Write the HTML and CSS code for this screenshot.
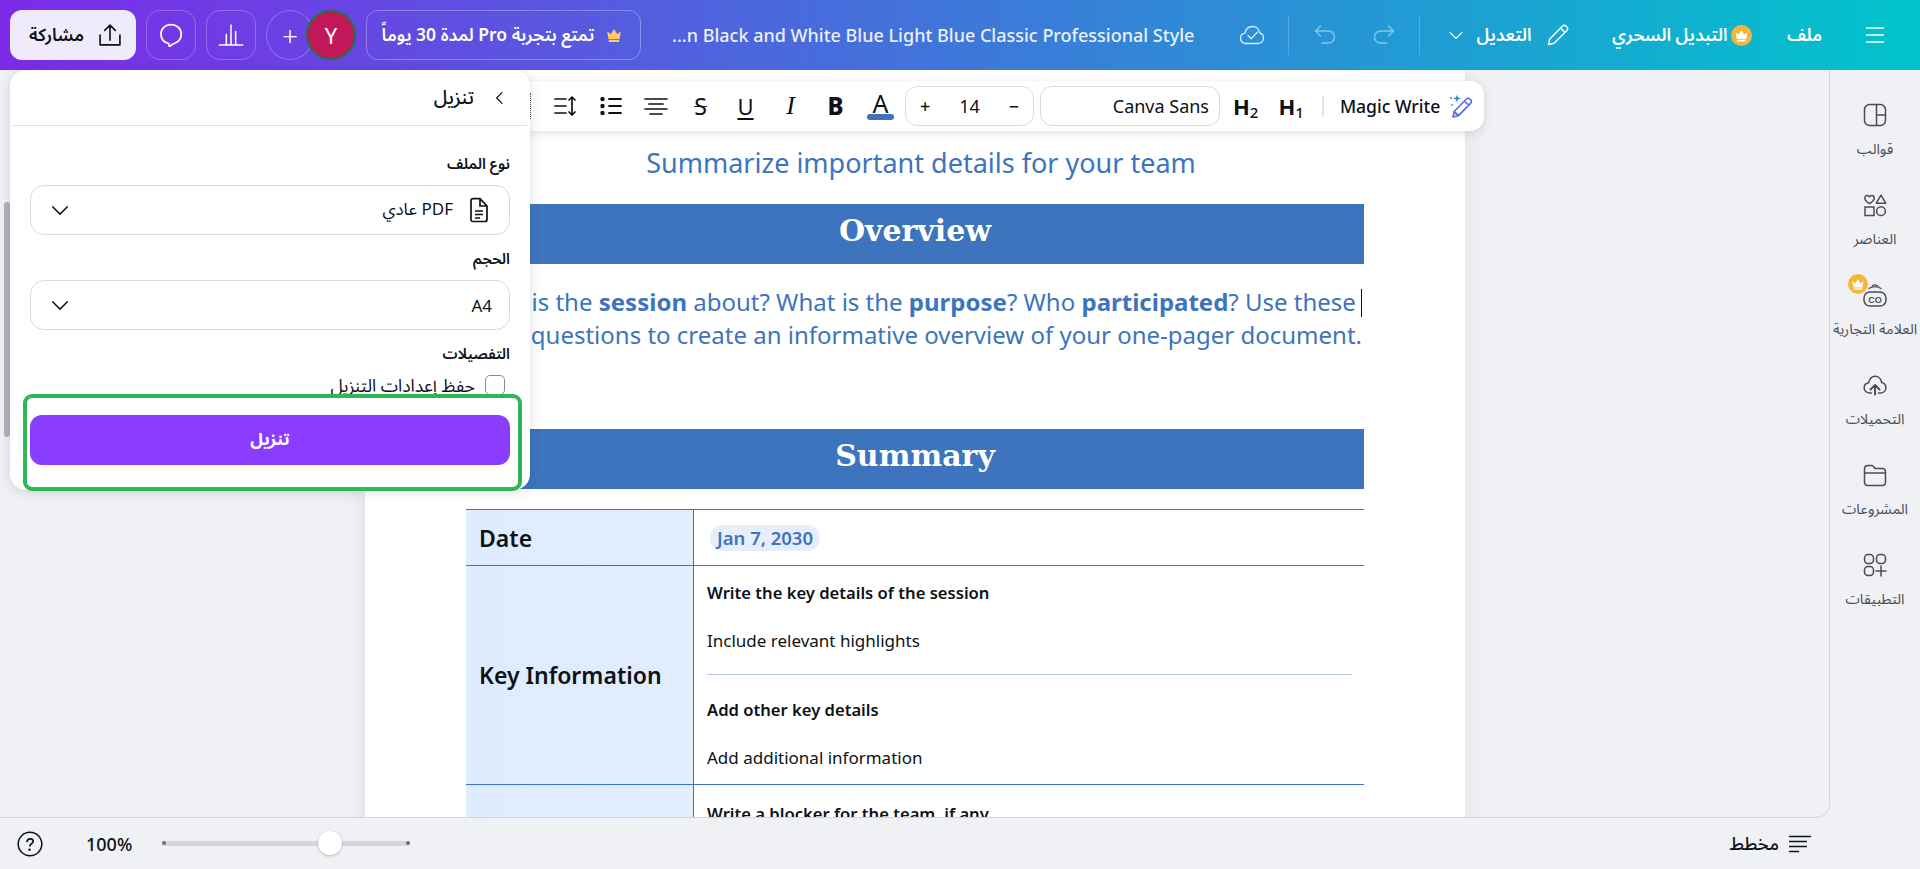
FILE: index.html
```html
<!DOCTYPE html>
<html lang="ar">
<head>
<meta charset="utf-8">
<title>Canva</title>
<link rel="stylesheet" href="styles.css">
</head>
<body>
<svg class="defs" width="0" height="0" aria-hidden="true">
  <symbol id="crown" viewBox="0 0 24 24"><path d="M4.500 8l3.900 3.200L12 5.500l3.600 5.700L19.500 8 18 16.500H6z" fill="currentColor"/><rect x="6" y="17.500" width="12" height="2.200" rx="1.100" fill="currentColor"/></symbol>
  <symbol id="chev" viewBox="0 0 24 24"><path d="M4 8.500l8 8 8-8" fill="none" stroke="currentColor" stroke-width="1.600" stroke-linecap="round" stroke-linejoin="round"/></symbol>
</svg>

<header class="topbar">
  <button class="btn-share">
    <svg class="ic28" viewBox="0 0 24 24"><path d="M3.500 12v8.500h17V12M12 16.500V3.500M7.500 8L12 3.500 16.500 8" fill="none" stroke="currentColor" stroke-width="1.400" stroke-linecap="round" stroke-linejoin="round"/></svg>
    <span>مشاركة</span>
  </button>
  <button class="btn-ghost">
    <svg class="ic28" viewBox="0 0 24 24"><path d="M12 3.200c5 0 8.800 3.500 8.800 8.100 0 4-2.700 6.900-7.100 8.400l-2.400 1.800c-.5.300-1 0-1-.6v-1.400c-4-1-6.900-4-6.900-8.100C3.400 6.700 7 3.200 12 3.200z" fill="none" stroke="#fff" stroke-width="1.500" stroke-linejoin="round"/></svg>
  </button>
  <button class="btn-ghost">
    <svg class="ic28" viewBox="0 0 24 24"><path d="M2 20.500h20M8 20V11.500M12 20V3.500M16 20V9" fill="none" stroke="#fff" stroke-width="1.300" stroke-linecap="round"/></svg>
  </button>
  <div class="people">
    <button class="btn-plus">+</button>
    <div class="avatar">Y</div>
  </div>
  <button class="btn-pro">
    <span dir="rtl">تمتع بتجربة Pro لمدة 30 يوماً</span>
    <svg class="crown-mini" viewBox="0 0 24 24"><use href="#crown"/></svg>
  </button>
  <div class="doc-title">...n Black and White Blue Light Blue Classic Professional Style</div>
  <svg class="cloud" viewBox="0 0 26 24"><path d="M7 20.500c-3.300 0-5.500-2.300-5.500-5.200 0-2.700 1.900-4.700 4.400-5.100C6.700 6.300 9.700 3.500 13.500 3.500c3.700 0 6.700 2.700 7.300 6.500 2.300.6 3.700 2.700 3.700 5 0 3-2.300 5.500-5.500 5.500z" fill="none" stroke="#dfe9fb" stroke-width="1.300"/><path d="M9 12.500l3.200 3.200L18.500 9" fill="none" stroke="#dfe9fb" stroke-width="1.300" stroke-linecap="round" stroke-linejoin="round"/></svg>
  <span class="vsep s1"></span>
  <svg class="hist h1" viewBox="0 0 24 24"><path d="M7.500 3L2.500 8l5 5M3 8h12.500a6 6 0 0 1 0 12H9" fill="none" stroke="currentColor" stroke-width="1.400" stroke-linecap="round" stroke-linejoin="round"/></svg>
  <svg class="hist h2" viewBox="0 0 24 24"><path d="M16.500 3l5 5-5 5M21 8H8.500a6 6 0 0 0 0 12H15" fill="none" stroke="currentColor" stroke-width="1.400" stroke-linecap="round" stroke-linejoin="round"/></svg>
  <span class="vsep s2"></span>
  <svg class="edit-chev" viewBox="0 0 24 24"><use href="#chev"/></svg>
  <span class="top-link edit-label">التعديل</span>
  <svg class="pencil" viewBox="0 0 24 24"><path d="M2.500 21.500l1.300-5.600L16.500 3.100c1-1 2.500-1 3.500 0l.9.900c1 1 1 2.500 0 3.500L8.100 20.200zM14.500 5l4.500 4.500" fill="none" stroke="#fff" stroke-width="1.400" stroke-linejoin="round"/></svg>
  <span class="top-link magic-label">التبديل السحري</span>
  <span class="crown-badge"><svg viewBox="0 0 24 24"><use href="#crown"/></svg></span>
  <span class="top-link file-label">ملف</span>
  <svg class="burger" viewBox="0 0 18 18"><path d="M.5 2h17M.5 9h17M.5 16h17" stroke="#fff" stroke-width="1.500" stroke-linecap="round" fill="none"/></svg>
</header>

<div class="workspace">
  <main class="canvas">
    <article class="page">
      <p class="subtitle">Summarize important details for your team</p>
      <h2 class="band">Overview</h2>
      <p class="para">What is the <b>session</b> about? What is the <b>purpose</b>? Who <b>participated</b>? Use these<span class="caret"></span><br>questions to create an informative overview of your one-pager document.</p>
      <h2 class="band band-summary">Summary</h2>
      <div class="tbl">
        <div class="row row-date">
          <div class="th">Date</div>
          <div class="td"><span class="chip">Jan 7, 2030</span></div>
        </div>
        <div class="row row-key">
          <div class="th">Key Information</div>
          <div class="td td-stack">
            <strong>Write the key details of the session</strong>
            <span>Include relevant highlights</span>
            <hr class="td-rule">
            <strong>Add other key details</strong>
            <span>Add additional information</span>
          </div>
        </div>
        <div class="row row-block">
          <div class="th"></div>
          <div class="td td-stack"><strong>Write a blocker for the team, if any</strong></div>
        </div>
      </div>
    </article>

    <div class="float-bar">
      <span class="dots"></span>
      <button class="tb">
        <svg class="ic24" viewBox="0 0 24 24"><path d="M1 5h11M1 12h11M1 19h11M18 3v18M15 6l3-3 3 3M15 18l3 3 3-3" fill="none" stroke="#0d1216" stroke-width="1.700" stroke-linecap="round" stroke-linejoin="round"/></svg>
      </button>
      <button class="tb">
        <svg class="ic24" viewBox="0 0 24 24"><circle cx="3.500" cy="5" r="2.200" fill="#0d1216"/><circle cx="3.500" cy="12" r="2.200" fill="#0d1216"/><circle cx="3.500" cy="19" r="2.200" fill="#0d1216"/><path d="M10 5h12M10 12h12M10 19h12" stroke="#0d1216" stroke-width="1.800" stroke-linecap="round"/></svg>
      </button>
      <button class="tb">
        <svg class="ic24" viewBox="0 0 24 24"><path d="M1 5h22M5 10h14M1 15h22M6 20h12" stroke="#0d1216" stroke-width="1.700" stroke-linecap="round"/></svg>
      </button>
      <button class="tb tb-s">S</button>
      <button class="tb tb-u">U</button>
      <button class="tb tb-i">I</button>
      <button class="tb tb-b">B</button>
      <button class="tb tb-a"><span>A</span><i class="a-bar"></i></button>
      <div class="size-box"><span>+</span><span class="size-num">14</span><span>−</span></div>
      <div class="font-box">Canva Sans</div>
      <span class="hd hd2">H<sub>2</sub></span>
      <span class="hd hd1">H<sub>1</sub></span>
      <span class="bar-sep"></span>
      <span class="mw">Magic Write</span>
      <svg class="mw-ic" viewBox="0 0 26 26"><path d="M5 24l1.200-5.500L18.500 6c1-1 2.400-1 3.300 0l.9.900c1 1 1 2.400 0 3.300L10.500 22.700zM16.500 8l4.300 4.300M6.500 19l4 3.500" fill="none" stroke="#5b6fd6" stroke-width="1.700" stroke-linejoin="round"/><path d="M9 1.500l1 3 3 1-3 1-1 3-1-3-3-1 3-1z" fill="#1f8ecf"/><circle cx="3" cy="5" r="1" fill="#1f8ecf"/><circle cx="4" cy="12" r="1" fill="#3b9ed8"/></svg>
    </div>
  </main>

  <aside class="rail">
    <a class="rail-item">
      <svg class="ic24 rail-ic" viewBox="0 0 24 24"><rect x="1.500" y="1.500" width="21" height="21" rx="5" fill="none" stroke="#4a4d55" stroke-width="1.500"/><path d="M13.500 1.500v21M13.500 12h9" fill="none" stroke="#4a4d55" stroke-width="1.500"/></svg>
      <span>قوالب</span>
    </a>
    <a class="rail-item">
      <svg class="ic24 rail-ic" viewBox="0 0 24 24"><path d="M6.500 10.500C3.500 8.700 1.800 7.200 1.800 5.200c0-1.500 1.100-2.700 2.500-2.700.9 0 1.700.5 2.200 1.200.5-.7 1.300-1.200 2.200-1.200 1.400 0 2.500 1.200 2.500 2.700 0 2-1.700 3.500-4.700 5.300zM18 2.200l4.700 8H13.300z" fill="none" stroke="#4a4d55" stroke-width="1.500" stroke-linejoin="round"/><rect x="2" y="14" width="9" height="8.500" fill="none" stroke="#4a4d55" stroke-width="1.500"/><circle cx="18" cy="18.200" r="4.400" fill="none" stroke="#4a4d55" stroke-width="1.500"/></svg>
      <span>العناصر</span>
    </a>
    <a class="rail-item rail-brand">
      <span class="rail-crown"><svg viewBox="0 0 24 24"><use href="#crown"/></svg></span>
      <svg class="ic24 rail-ic" viewBox="0 0 24 24"><rect x="1" y="9" width="22" height="14" rx="6" fill="none" stroke="#4a4d55" stroke-width="1.500"/><path d="M6 5.500C9 3 15 3 18 5.500M9.500 2.500c1.500-.8 3.500-.8 5 0" fill="none" stroke="#4a4d55" stroke-width="1.300" stroke-linecap="round"/><text x="12" y="19.500" text-anchor="middle" class="co">CO</text></svg>
      <span>العلامة التجارية</span>
    </a>
    <a class="rail-item">
      <svg class="ic24 rail-ic" viewBox="0 0 24 24"><path d="M8.500 20H6.800C3.600 20 1.200 17.700 1.200 14.900c0-2.600 1.800-4.700 4.400-5.100C6.400 6 9 3.300 12.300 3.300c3.200 0 5.800 2.600 6.300 6.300 2.500.5 4.300 2.700 4.300 5.200 0 3-2.400 5.200-5.500 5.200h-1.900" fill="none" stroke="#4a4d55" stroke-width="1.500" stroke-linecap="round"/><path d="M12 21.500V12M7.500 16.500L12 12l4.500 4.500" fill="none" stroke="#4a4d55" stroke-width="1.900" stroke-linecap="round" stroke-linejoin="round"/></svg>
      <span>التحميلات</span>
    </a>
    <a class="rail-item">
      <svg class="ic24 rail-ic" viewBox="0 0 24 24"><path d="M1.500 6c0-2 1.300-3.500 3.300-3.500h3.500c1.300 0 2 .5 2.700 1.500l1 1.500h7.200c2 0 3.300 1.500 3.300 3.500v10c0 2-1.300 3.500-3.300 3.500H4.800c-2 0-3.300-1.500-3.300-3.500zM1.500 10h21" fill="none" stroke="#4a4d55" stroke-width="1.500" stroke-linejoin="round"/></svg>
      <span>المشروعات</span>
    </a>
    <a class="rail-item">
      <svg class="ic24 rail-ic" viewBox="0 0 24 24"><rect x="1.500" y="1.500" width="9" height="9" rx="3.500" fill="none" stroke="#4a4d55" stroke-width="1.500"/><rect x="13.500" y="1.500" width="9" height="9" rx="3.500" fill="none" stroke="#4a4d55" stroke-width="1.500"/><rect x="1.500" y="13.500" width="9" height="9" rx="3.500" fill="none" stroke="#4a4d55" stroke-width="1.500"/><path d="M18 13v10M13 18h10" stroke="#4a4d55" stroke-width="1.500" stroke-linecap="round"/></svg>
      <span>التطبيقات</span>
    </a>
  </aside>
</div>

<footer class="statusbar">
  <svg class="help" viewBox="0 0 26 26"><circle cx="13" cy="13" r="11.800" fill="none" stroke="#0d1216" stroke-width="1.500"/><path d="M10 10.500c.3-1.700 1.500-2.700 3.200-2.700 1.800 0 3 1 3 2.500 0 1.300-.9 2-2 2.700-.8.500-1.200 1-1.200 1.800" fill="none" stroke="#0d1216" stroke-width="1.700" stroke-linecap="round"/><circle cx="12.500" cy="18.800" r="1.200" fill="#0d1216"/></svg>
  <span class="zoom-val">100%</span>
  <div class="slider"><i class="dot dot-l"></i><i class="knob"></i><i class="dot dot-r"></i></div>
  <span class="notes">مخطط</span>
  <svg class="notes-ic" viewBox="0 0 22 18"><path d="M0 1.500h22M0 6.500h18M0 11.500h18M0 16.500h10" stroke="#0d1216" stroke-width="1.600" fill="none"/></svg>
</footer>

<div class="scroll-thumb"></div>

<section class="panel">
  <div class="panel-head">
    <span>تنزيل</span>
    <svg class="head-chev" viewBox="0 0 24 24"><path d="M15 4l-8 8 8 8" fill="none" stroke="#0d1216" stroke-width="1.800" stroke-linecap="round" stroke-linejoin="round"/></svg>
  </div>
  <div class="panel-body">
    <label class="fld-label">نوع الملف</label>
    <div class="select">
      <svg class="sel-chev" viewBox="0 0 24 24"><use href="#chev"/></svg>
      <span class="sel-val" dir="rtl">PDF عادي</span>
      <svg class="file-ic" viewBox="0 0 20 26"><path d="M2 4c0-1.300.7-2.300 2-2.300h7l7 7.300v13.500c0 1.300-.8 2-2 2H4c-1.300 0-2-.7-2-2zM11 1.700V9h7M6 14h8M6 17.500h8M6 21h5" fill="none" stroke="#0d1216" stroke-width="1.700" stroke-linejoin="round"/></svg>
    </div>
    <label class="fld-label">الحجم</label>
    <div class="select">
      <svg class="sel-chev" viewBox="0 0 24 24"><use href="#chev"/></svg>
      <span class="sel-val sel-size">A4</span>
    </div>
    <label class="fld-label">التفصيلات</label>
    <div class="check-row">
      <span class="check-label">حفظ إعدادات التنزيل</span>
      <span class="checkbox"></span>
    </div>
  </div>
  <div class="panel-foot">
    <button class="btn-download">تنزيل</button>
  </div>
  <div class="highlight"></div>
</section>
</body>
</html>
```

FILE: styles.css
```css
* { box-sizing: border-box; }
html, body { height: 100%; }
body {
  margin: 0;
  height: 869px;
  overflow: hidden;
  position: relative;
  display: flex;
  flex-direction: column;
  background: #f0f1f5;
  color: #0d1216;
  font-family: "Noto Sans", "Noto Sans Arabic", "DejaVu Sans", sans-serif;
}
button { font: inherit; color: inherit; background: none; border: 0; padding: 0; }
.defs { position: absolute; }
.ic24 { width: 24px; height: 24px; display: block; }
.ic28 { width: 28px; height: 28px; display: block; }

/* top bar */
.topbar {
  flex: 0 0 70px;
  display: flex;
  align-items: center;
  padding-left: 10px;
  background: linear-gradient(90deg, #7d2ae8 0%, #00c4cc 100%);
  color: #fff;
}
.btn-share {
  width: 126px; height: 50px; border-radius: 12px; padding-left: 7px;
  display: flex; align-items: center; justify-content: center; gap: 12px;
  background: #f0ebfb; color: #0d1216; font-size: 17.500px; font-weight: 600;
  flex-direction: row-reverse;
}
.btn-ghost {
  width: 50px; height: 50px; margin-left: 10px; border-radius: 14px;
  border: 1px solid rgba(255,255,255,.25);
  display: flex; align-items: center; justify-content: center;
}
.people { display: flex; margin-left: 10px; }
.btn-plus {
  width: 48px; height: 50px; border-radius: 50%;
  border: 1px solid rgba(255,255,255,.25);
  color: #fff; font-size: 28px; font-weight: 300; line-height: 1;
}
.avatar {
  width: 50px; height: 50px; margin-left: -8px; border-radius: 50%;
  background: #c2185b; border: 2px solid #24703f;
  display: flex; align-items: center; justify-content: center;
  color: #fff; font-size: 22px;
}
.btn-pro {
  width: 275px; height: 50px; margin-left: 10px; border-radius: 12px;
  border: 1px solid rgba(255,255,255,.3);
  display: flex; align-items: center; justify-content: center; gap: 9px;
  font-size: 17.500px; font-weight: 600; color: #fff;
}
.crown-mini { width: 22px; height: 22px; color: #ffc76b; }
.doc-title {
  width: 519px; margin-left: 31px;
  font-size: 18px; font-weight: 500; color: #eaf0fd; white-space: nowrap;
}
.cloud { width: 26px; height: 24px; margin-left: 48px; }
.vsep { width: 1px; height: 40px; background: rgba(255,255,255,.2); }
.s1 { margin-left: 23px; }
.s2 { margin-left: 23px; }
.hist { width: 24px; height: 24px; color: rgba(255,255,255,.45); }
.h1 { margin-left: 24px; }
.h2 { margin-left: 35px; }
.edit-chev { width: 18px; height: 18px; margin-left: 27px; color: #fff; }
.top-link { font-size: 17.500px; font-weight: 600; color: #fff; white-space: nowrap; }
.edit-label { margin-left: 11px; width: 56px; text-align: center; }
.pencil { width: 24px; height: 24px; margin-left: 14px; }
.magic-label { margin-left: 42px; width: 115px; text-align: center; }
.crown-badge {
  width: 21px; height: 21px; margin-left: 4px; border-radius: 50%;
  background: #f4b63a; color: #fff; display: block; padding: 1px;
}
.crown-badge svg, .rail-crown svg { display: block; width: 100%; height: 100%; }
.file-label { margin-left: 35px; width: 35px; text-align: center; }
.burger { width: 18px; height: 18px; margin-left: 44px; }

/* workspace */
.workspace { flex: 1; display: flex; min-height: 0; }
.canvas {
  position: relative;
  width: 1830px;
  padding-left: 365px;
  overflow: hidden;
  border-right: 1px solid #d4d5da;
  border-bottom: 1px solid #d4d5da;
  border-bottom-right-radius: 14px;
}
.page {
  width: 1100px; height: 1200px;
  padding: 73px 101px 0;
  background: #fff;
  box-shadow: 0 0 24px rgba(60,66,87,.09);
}
.subtitle {
  margin: 0; padding-left: 12px;
  text-align: center; font-size: 27px; line-height: 40px; color: #3d74bd;
  white-space: nowrap;
}
.band {
  margin: 21px 0 0; height: 60px;
  background: #3d74bd; color: #fff;
  text-align: center;
  font: 700 30px/54px "DejaVu Serif", "Liberation Serif", serif;
}
.para {
  margin: 21px 0 0; height: 144px;
  padding-right: 2px;
  text-align: right; white-space: nowrap;
  font-size: 24px; line-height: 33px; color: #3d74bd;
  direction: ltr;
}
.caret {
  display: inline-block; width: 1px; height: 28px;
  margin: 0 2px 0 5px; vertical-align: -6px; background: #0d1216;
}
.band-summary { margin-top: 0; }
.tbl { margin-top: 20px; border-top: 1px solid #3d74bd; }
.row { display: grid; grid-template-columns: 228px 1fr; border-bottom: 1px solid #3d74bd; }
.row-date { height: 56px; }
.row-key { height: 219px; }
.row-block { height: 200px; }
.th {
  display: flex; align-items: center; padding-left: 13px;
  background: linear-gradient(90deg, #deecfe, #e2edfd);
  border-right: 1px solid #3d74bd;
  font-size: 23px; font-weight: 600;
}
.td { display: flex; align-items: center; padding-left: 16px; }
.chip {
  height: 26px; padding: 0 7px; border-radius: 13px;
  background: #e6eefb; color: #3d74bd;
  font-size: 18.500px; font-weight: 600; line-height: 26px;
}
.td-stack {
  flex-direction: column; align-items: stretch; justify-content: flex-start;
  padding: 16px 12px 0 13px; font-size: 17px;
}
.td-stack strong, .td-stack span { display: block; line-height: 22px; }
.td-stack strong { font-weight: 600; font-size: 16.600px; }
.td-stack span { margin-top: 26px; }
.td-rule { width: 100%; margin: 22px 0 24px; border: 0; border-top: 1px solid #b6c6e4; }
.row-block .td-stack { padding-top: 18px; }

/* floating text toolbar */
.float-bar {
  position: absolute; left: 420px; top: 11px; width: 1064px; height: 50px;
  display: flex; align-items: center; padding-left: 110px;
  background: #fff; border-radius: 14px;
  box-shadow: 0 2px 10px rgba(40,44,60,.14);
}
.dots { width: 0; height: 26px; border-left: 1px dotted #555; margin-right: 12px; flex: none; }
.tb {
  width: 45px; height: 50px; flex: none;
  display: flex; align-items: center; justify-content: center;
  font-size: 22px; line-height: 1; color: #0d1216; position: relative;
}
.tb-s { text-decoration: line-through; text-decoration-thickness: 1px; font-weight: 400; font-size: 23px; }
.tb-u { text-decoration: underline; text-underline-offset: 3px; text-decoration-thickness: 1.500px; font-size: 22px; }
.tb-i { font-style: italic; font-family: "Liberation Serif", serif; font-size: 26px; }
.tb-b { font-weight: 800; font-size: 24px; }
.tb-a { flex-direction: column; font-size: 25px; justify-content: flex-start; padding-top: 10px; }
.tb-a span { line-height: 24px; }
.a-bar { display: block; width: 27px; height: 6px; border-radius: 3px; background: #3d74bd; margin-top: -1px; }
.size-box {
  width: 129px; height: 40px; margin-left: 2px; flex: none;
  border: 1px solid #d9dade; border-radius: 12px;
  display: flex; align-items: center; justify-content: space-between;
  padding: 0 14px; font-size: 18px; font-weight: 500;
}
.size-num { font-weight: 400; }
.font-box {
  width: 180px; height: 40px; margin-left: 6px; flex: none;
  border: 1px solid #d9dade; border-radius: 12px;
  text-align: right; padding-right: 10px; line-height: 38px; font-size: 18px;
}
.hd { flex: none; font-size: 22px; font-weight: 700; line-height: 1; white-space: nowrap; }
.hd sub { font-size: 15px; font-weight: 500; vertical-align: -3px; line-height: 0; }
.hd2 { margin-left: 13px; }
.hd1 { margin-left: 20px; }
.bar-sep { width: 2px; height: 20px; background: #e2e3e7; margin-left: 18px; flex: none; }
.mw { margin-left: 16px; font-size: 17.600px; font-weight: 500; white-space: nowrap; }
.mw-ic { width: 26px; height: 26px; margin-left: 8px; flex: none; }

/* right rail */
.rail { flex: 1; padding-top: 14px; display: flex; flex-direction: column; }
.rail-item {
  height: 90px; padding-top: 19px; position: relative;
  display: flex; flex-direction: column; align-items: center;
  font-size: 14.500px; color: #4a4d55; white-space: nowrap;
}
.rail-item span:last-child { margin-top: 11px; line-height: 20px; }
.rail-ic { flex: none; }
.co { font: 700 9px "Liberation Sans", sans-serif; fill: #4a4d55; }
.rail-crown {
  position: absolute; left: 18px; top: 10px; width: 20px; height: 20px;
  border-radius: 50%; background: #f4b63a; color: #fff; padding: 1px;
}

/* status bar */
.statusbar {
  flex: 0 0 51px; display: flex; align-items: center;
  padding-left: 17px;
}
.help { width: 26px; height: 26px; }
.zoom-val { margin-left: 43px; width: 50px; font-size: 18px; font-weight: 500; white-space: nowrap; }
.slider {
  margin-left: 26px; width: 248px; height: 5px; border-radius: 3px;
  background: #d5d6db; position: relative;
}
.dot { position: absolute; top: 0; width: 4px; height: 4px; border-radius: 50%; background: #6d6f78; }
.dot-l { left: 0; }
.dot-r { right: 0; }
.knob {
  position: absolute; left: 156px; top: -10px; width: 24px; height: 24px; border-radius: 50%;
  background: #fff; box-shadow: 0 1px 3px rgba(0,0,0,.25);
}
.notes { margin-left: auto; font-size: 18px; font-weight: 500; }
.notes-ic { width: 22px; height: 18px; margin: 0 109px 0 10px; }

/* overlays */
.scroll-thumb {
  position: absolute; left: 4px; top: 202px; width: 6px; height: 235px;
  border-radius: 3px; background: #b1b2bc;
}
.panel {
  position: absolute; left: 10px; top: 70px; width: 520px; height: 420px;
  display: flex; flex-direction: column;
  background: #fff; border-radius: 16px;
  box-shadow: 0 2px 12px rgba(40,44,60,.16);
}
.panel-head {
  flex: 0 0 56px; margin: 0 3px; padding-right: 19px;
  display: flex; align-items: center; justify-content: flex-end; gap: 18px;
  border-bottom: 1px solid #dfe0e4; font-size: 19px; font-weight: 500;
}
.head-chev { width: 16px; height: 16px; }
.panel-body { flex: 1; min-height: 0; overflow: hidden; padding: 26px 20px 0; }
.fld-label {
  display: block; height: 22px; line-height: 22px; margin-bottom: 11px;
  text-align: right; font-size: 15px; font-weight: 600;
}
.select {
  height: 50px; margin-bottom: 12px;
  border: 1px solid #d9dade; border-radius: 14px;
  display: flex; align-items: center; padding: 0 22px 0 18px;
  font-size: 17px;
}
.sel-chev { width: 22px; height: 22px; }
.sel-val { margin-left: auto; }
.sel-size { margin-right: -5px; }
.file-ic { width: 20px; height: 26px; margin-left: 16px; margin-right: -2px; }
.check-row { margin-top: -1px; display: flex; justify-content: flex-end; align-items: center; gap: 10px; padding-right: 5px; }
.check-label { font-size: 17.500px; line-height: 22px; white-space: nowrap; }
.checkbox { width: 20px; height: 20px; border: 1px solid #8a8d96; border-radius: 5px; flex: none; }
.panel-foot { flex: 0 0 96px; padding: 21px 20px 0; }
.btn-download {
  width: 100%; height: 50px; border-radius: 12px;
  background: #8b3dff; color: #fff; font-size: 17px; font-weight: 700;
}
.highlight {
  position: absolute; left: 13px; top: 324px; width: 499px; height: 97px;
  border: 4px solid #2fb755; border-radius: 9px; pointer-events: none;
}
```
